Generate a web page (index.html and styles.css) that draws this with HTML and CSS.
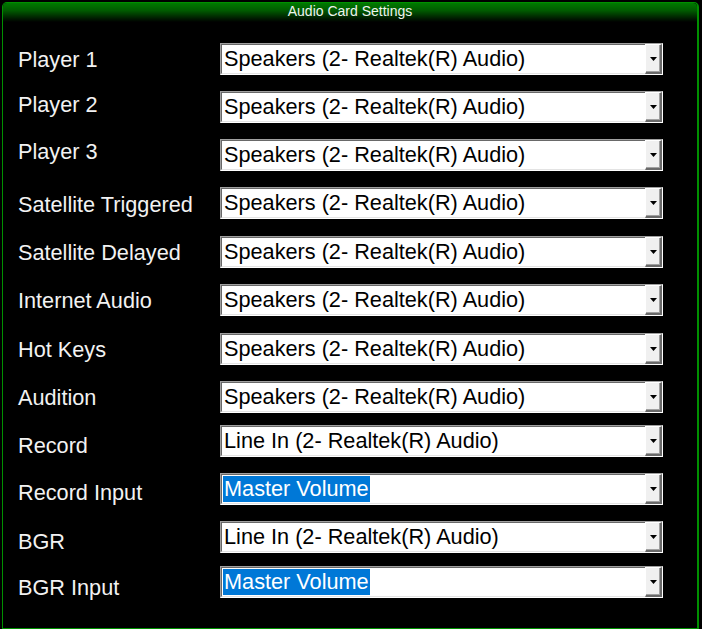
FILE: index.html
```html
<!DOCTYPE html>
<html lang="en">
<head>
<meta charset="utf-8">
<title>Audio Card Settings</title>
<link rel="stylesheet" href="styles.css">
</head>
<body>
<div class="panel">
  <div class="panel-header">Audio Card Settings</div>
  <div class="settings">
    <div class="row"><span class="label">Player 1</span><div class="combo"><span class="value">Speakers (2- Realtek(R) Audio)</span><span class="btn"><svg width="7" height="4" viewBox="0 0 7 4"><path d="M0 0H7L3.5 4Z" fill="#000"/></svg></span></div></div>
    <div class="row"><span class="label">Player 2</span><div class="combo"><span class="value">Speakers (2- Realtek(R) Audio)</span><span class="btn"><svg width="7" height="4" viewBox="0 0 7 4"><path d="M0 0H7L3.5 4Z" fill="#000"/></svg></span></div></div>
    <div class="row"><span class="label">Player 3</span><div class="combo"><span class="value">Speakers (2- Realtek(R) Audio)</span><span class="btn"><svg width="7" height="4" viewBox="0 0 7 4"><path d="M0 0H7L3.5 4Z" fill="#000"/></svg></span></div></div>
    <div class="row"><span class="label">Satellite Triggered</span><div class="combo"><span class="value">Speakers (2- Realtek(R) Audio)</span><span class="btn"><svg width="7" height="4" viewBox="0 0 7 4"><path d="M0 0H7L3.5 4Z" fill="#000"/></svg></span></div></div>
    <div class="row"><span class="label">Satellite Delayed</span><div class="combo"><span class="value">Speakers (2- Realtek(R) Audio)</span><span class="btn"><svg width="7" height="4" viewBox="0 0 7 4"><path d="M0 0H7L3.5 4Z" fill="#000"/></svg></span></div></div>
    <div class="row"><span class="label">Internet Audio</span><div class="combo"><span class="value">Speakers (2- Realtek(R) Audio)</span><span class="btn"><svg width="7" height="4" viewBox="0 0 7 4"><path d="M0 0H7L3.5 4Z" fill="#000"/></svg></span></div></div>
    <div class="row"><span class="label">Hot Keys</span><div class="combo"><span class="value">Speakers (2- Realtek(R) Audio)</span><span class="btn"><svg width="7" height="4" viewBox="0 0 7 4"><path d="M0 0H7L3.5 4Z" fill="#000"/></svg></span></div></div>
    <div class="row"><span class="label">Audition</span><div class="combo"><span class="value">Speakers (2- Realtek(R) Audio)</span><span class="btn"><svg width="7" height="4" viewBox="0 0 7 4"><path d="M0 0H7L3.5 4Z" fill="#000"/></svg></span></div></div>
    <div class="row"><span class="label">Record</span><div class="combo"><span class="value">Line In (2- Realtek(R) Audio)</span><span class="btn"><svg width="7" height="4" viewBox="0 0 7 4"><path d="M0 0H7L3.5 4Z" fill="#000"/></svg></span></div></div>
    <div class="row"><span class="label">Record Input</span><div class="combo"><span class="value"><span class="selected">Master Volume</span></span><span class="btn"><svg width="7" height="4" viewBox="0 0 7 4"><path d="M0 0H7L3.5 4Z" fill="#000"/></svg></span></div></div>
    <div class="row"><span class="label">BGR</span><div class="combo"><span class="value">Line In (2- Realtek(R) Audio)</span><span class="btn"><svg width="7" height="4" viewBox="0 0 7 4"><path d="M0 0H7L3.5 4Z" fill="#000"/></svg></span></div></div>
    <div class="row"><span class="label">BGR Input</span><div class="combo"><span class="value"><span class="selected">Master Volume</span></span><span class="btn"><svg width="7" height="4" viewBox="0 0 7 4"><path d="M0 0H7L3.5 4Z" fill="#000"/></svg></span></div></div>
  </div>
</div>
</body>
</html>
```

FILE: styles.css
```css
html, body {
  margin: 0;
  padding: 0;
  background: #000;
}

body {
  font-family: "Liberation Sans", Arial, sans-serif;
  width: 702px;
  height: 629px;
  overflow: hidden;
}

.panel {
  box-sizing: border-box;
  margin: 2px 3px 0 2px;
  height: 627px;
  border: 1px solid #009000;
  border-right-width: 2px;
  border-radius: 5px 5px 0 0;
  background: #000;
}

.panel-header {
  height: 19px;
  background: linear-gradient(to bottom, #007a00 0%, #005a00 40%, #000 100%);
  border-radius: 4px 4px 0 0;
  color: #eef4ee;
  font-size: 14px;
  line-height: 16px;
  text-align: center;
}

.settings {
  padding: 21px 0 0 15px;
  display: flex;
  flex-direction: column;
}

.row {
  display: flex;
  align-items: flex-start;
  height: 48px;
}

.row:nth-child(4),
.row:nth-child(6) {
  height: 49px;
}

.row:nth-child(8) {
  height: 44px;
}

.row:nth-child(11) {
  height: 45px;
}

.label {
  width: 202px;
  flex: none;
  margin-top: 5px;
  color: #f2f2f2;
  font-size: 21.7px;
  line-height: 24px;
  white-space: nowrap;
}

.row:nth-child(2) .label { margin-top: 2px; }
.row:nth-child(3) .label { margin-top: 1px; }
.row:nth-child(4) .label { margin-top: 6px; }
.row:nth-child(9) .label,
.row:nth-child(11) .label { margin-top: 9px; }
.row:nth-child(10) .label { margin-top: 8px; }
.row:nth-child(12) .label { margin-top: 10px; }

/* sunken combo box */
.combo {
  box-sizing: border-box;
  width: 443px;
  height: 32px;
  display: flex;
  border-style: solid;
  border-width: 1px;
  border-color: #a0a0a0 #ffffff #ffffff #a0a0a0;
  background: #fff;
}

.combo .value {
  flex: 1;
  display: flex;
  align-items: center;
  border-style: solid;
  border-width: 1px 0 1px 1px;
  border-color: #696969 transparent #e3e3e3 #696969;
  padding-left: 2px;
  color: #000;
  font-size: 21.7px;
  line-height: 28px;
  white-space: nowrap;
  overflow: hidden;
}

.combo .selected {
  background: #0078d7;
  color: #fff;
  line-height: 26px;
  margin-left: -1px;
  padding: 0 1px;
}

/* raised drop-down button */
.combo .btn {
  box-sizing: border-box;
  width: 17px;
  height: 30px;
  flex: none;
  display: flex;
  align-items: center;
  justify-content: center;
  background: #f0f0f0;
  border-style: solid;
  border-width: 1px 2px 2px 1px;
  border-color: #ffffff #696969 #696969 #ffffff;
  box-shadow: inset -1px -1px 0 #a0a0a0;
}

.combo .btn svg {
  display: block;
  margin-top: 1px;
}
```
